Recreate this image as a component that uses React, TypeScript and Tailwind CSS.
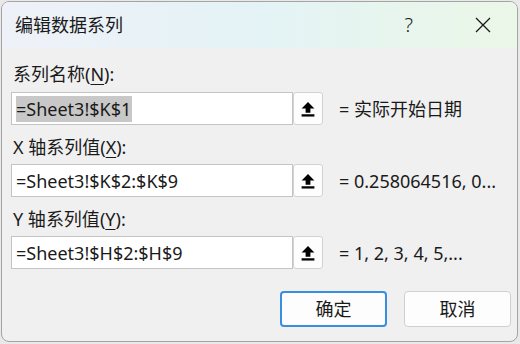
import React from "react";

const font = { fontFamily: '"Noto Sans", "Noto Sans CJK SC", sans-serif' };

function UploadIcon() {
  return (
    <svg width="14" height="16" viewBox="0 0 12 14" fill="#000">
      <path d="M6 0.8 L11.6 6.6 H8.1 V10.2 H3.9 V6.6 H0.4 Z" />
      <rect x="0.4" y="11.6" width="11.2" height="2" />
    </svg>
  );
}

function RefInput({ value, selected }: { value: string; selected?: boolean }) {
  return (
    <div className="flex items-center">
      <div className="flex h-[33px] w-[282px] items-center border border-[#c4c4c4] bg-white pl-[4px]">
        <span
          className={
            "text-[18px] leading-[26px] text-[#1a1a1a] " +
            (selected ? "bg-[#c8c8c8] pr-[1px]" : "")
          }
        >
          {value}
        </span>
      </div>
      <div className="flex h-[33px] w-[30px] items-center justify-center rounded-[3px] border border-[#d2d2d2] bg-[#fdfdfd]">
        <UploadIcon />
      </div>
    </div>
  );
}

function Row({
  label,
  ul,
  prefix,
  value,
  result,
  selected,
  labelMt,
  inputMt,
}: {
  label: string;
  ul: string;
  prefix?: string;
  value: string;
  result: string;
  selected?: boolean;
  labelMt: string;
  inputMt: string;
}) {
  return (
    <div className="flex flex-col">
      <div className={"h-[24px] pl-[11px] text-[18px] leading-[24px] text-[#1a1a1a] " + labelMt}>
        {prefix}
        {label}(<span className="underline underline-offset-[3px]">{ul}</span>):
      </div>
      <div className={"flex items-center pl-[9px] " + inputMt}>
        <RefInput value={value} selected={selected} />
        <span className="ml-[16px] whitespace-nowrap text-[18px] leading-[24px] text-[#1a1a1a]">
          {result}
        </span>
      </div>
    </div>
  );
}

export default function App() {
  return (
    <div className="h-[344px] w-[520px] overflow-hidden bg-[#e9e9e9] pl-[1px] pt-[1px]" style={font}>
      <div className="flex h-[341px] w-[517px] flex-col overflow-hidden rounded-[8px] border border-[#a4a4a4] bg-[#f0f0f0]">
        <div className="flex h-[46px] shrink-0 items-center bg-gradient-to-r from-[#eef1f8] via-[#e4f3f6] to-[#ebf7e7]">
          <div className="pl-[13px] text-[18px] leading-[24px] text-[#1a1a1a]">编辑数据系列</div>
          <div className="flex-1" />
          <div className="mr-[62px] text-[20px] font-light leading-[24px] text-[#1a1a1a]">?</div>
          <svg width="16" height="16" viewBox="0 0 16 16" className="mr-[26px]">
            <path d="M1 1 L15 15 M15 1 L1 15" stroke="#1a1a1a" strokeWidth="1.3" />
          </svg>
        </div>
        <Row
          label="系列名称"
          ul="N"
          value="=Sheet3!$K$1"
          result="= 实际开始日期"
          selected
          labelMt="mt-[14px]"
          inputMt="mt-[6px]"
        />
        <Row
          prefix="X 轴"
          label="系列值"
          ul="X"
          value="=Sheet3!$K$2:$K$9"
          result="= 0.258064516, 0..."
          labelMt="mt-[10px]"
          inputMt="mt-[5px]"
        />
        <Row
          prefix="Y 轴"
          label="系列值"
          ul="Y"
          value="=Sheet3!$H$2:$H$9"
          result="= 1, 2, 3, 4, 5,..."
          labelMt="mt-[10px]"
          inputMt="mt-[5px]"
        />
        <div className="mt-[22px] flex justify-end gap-[17px] pr-[6px]">
          <button className="flex h-[36px] w-[107px] items-center justify-center rounded-[4px] border-2 border-[#3a8ee0] bg-[#fdfdfd] text-[18px] text-[#1a1a1a]">
            确定
          </button>
          <button className="flex h-[36px] w-[107px] items-center justify-center rounded-[4px] border border-[#d0d0d0] bg-[#fdfdfd] text-[18px] text-[#1a1a1a]">
            取消
          </button>
        </div>
      </div>
    </div>
  );
}
